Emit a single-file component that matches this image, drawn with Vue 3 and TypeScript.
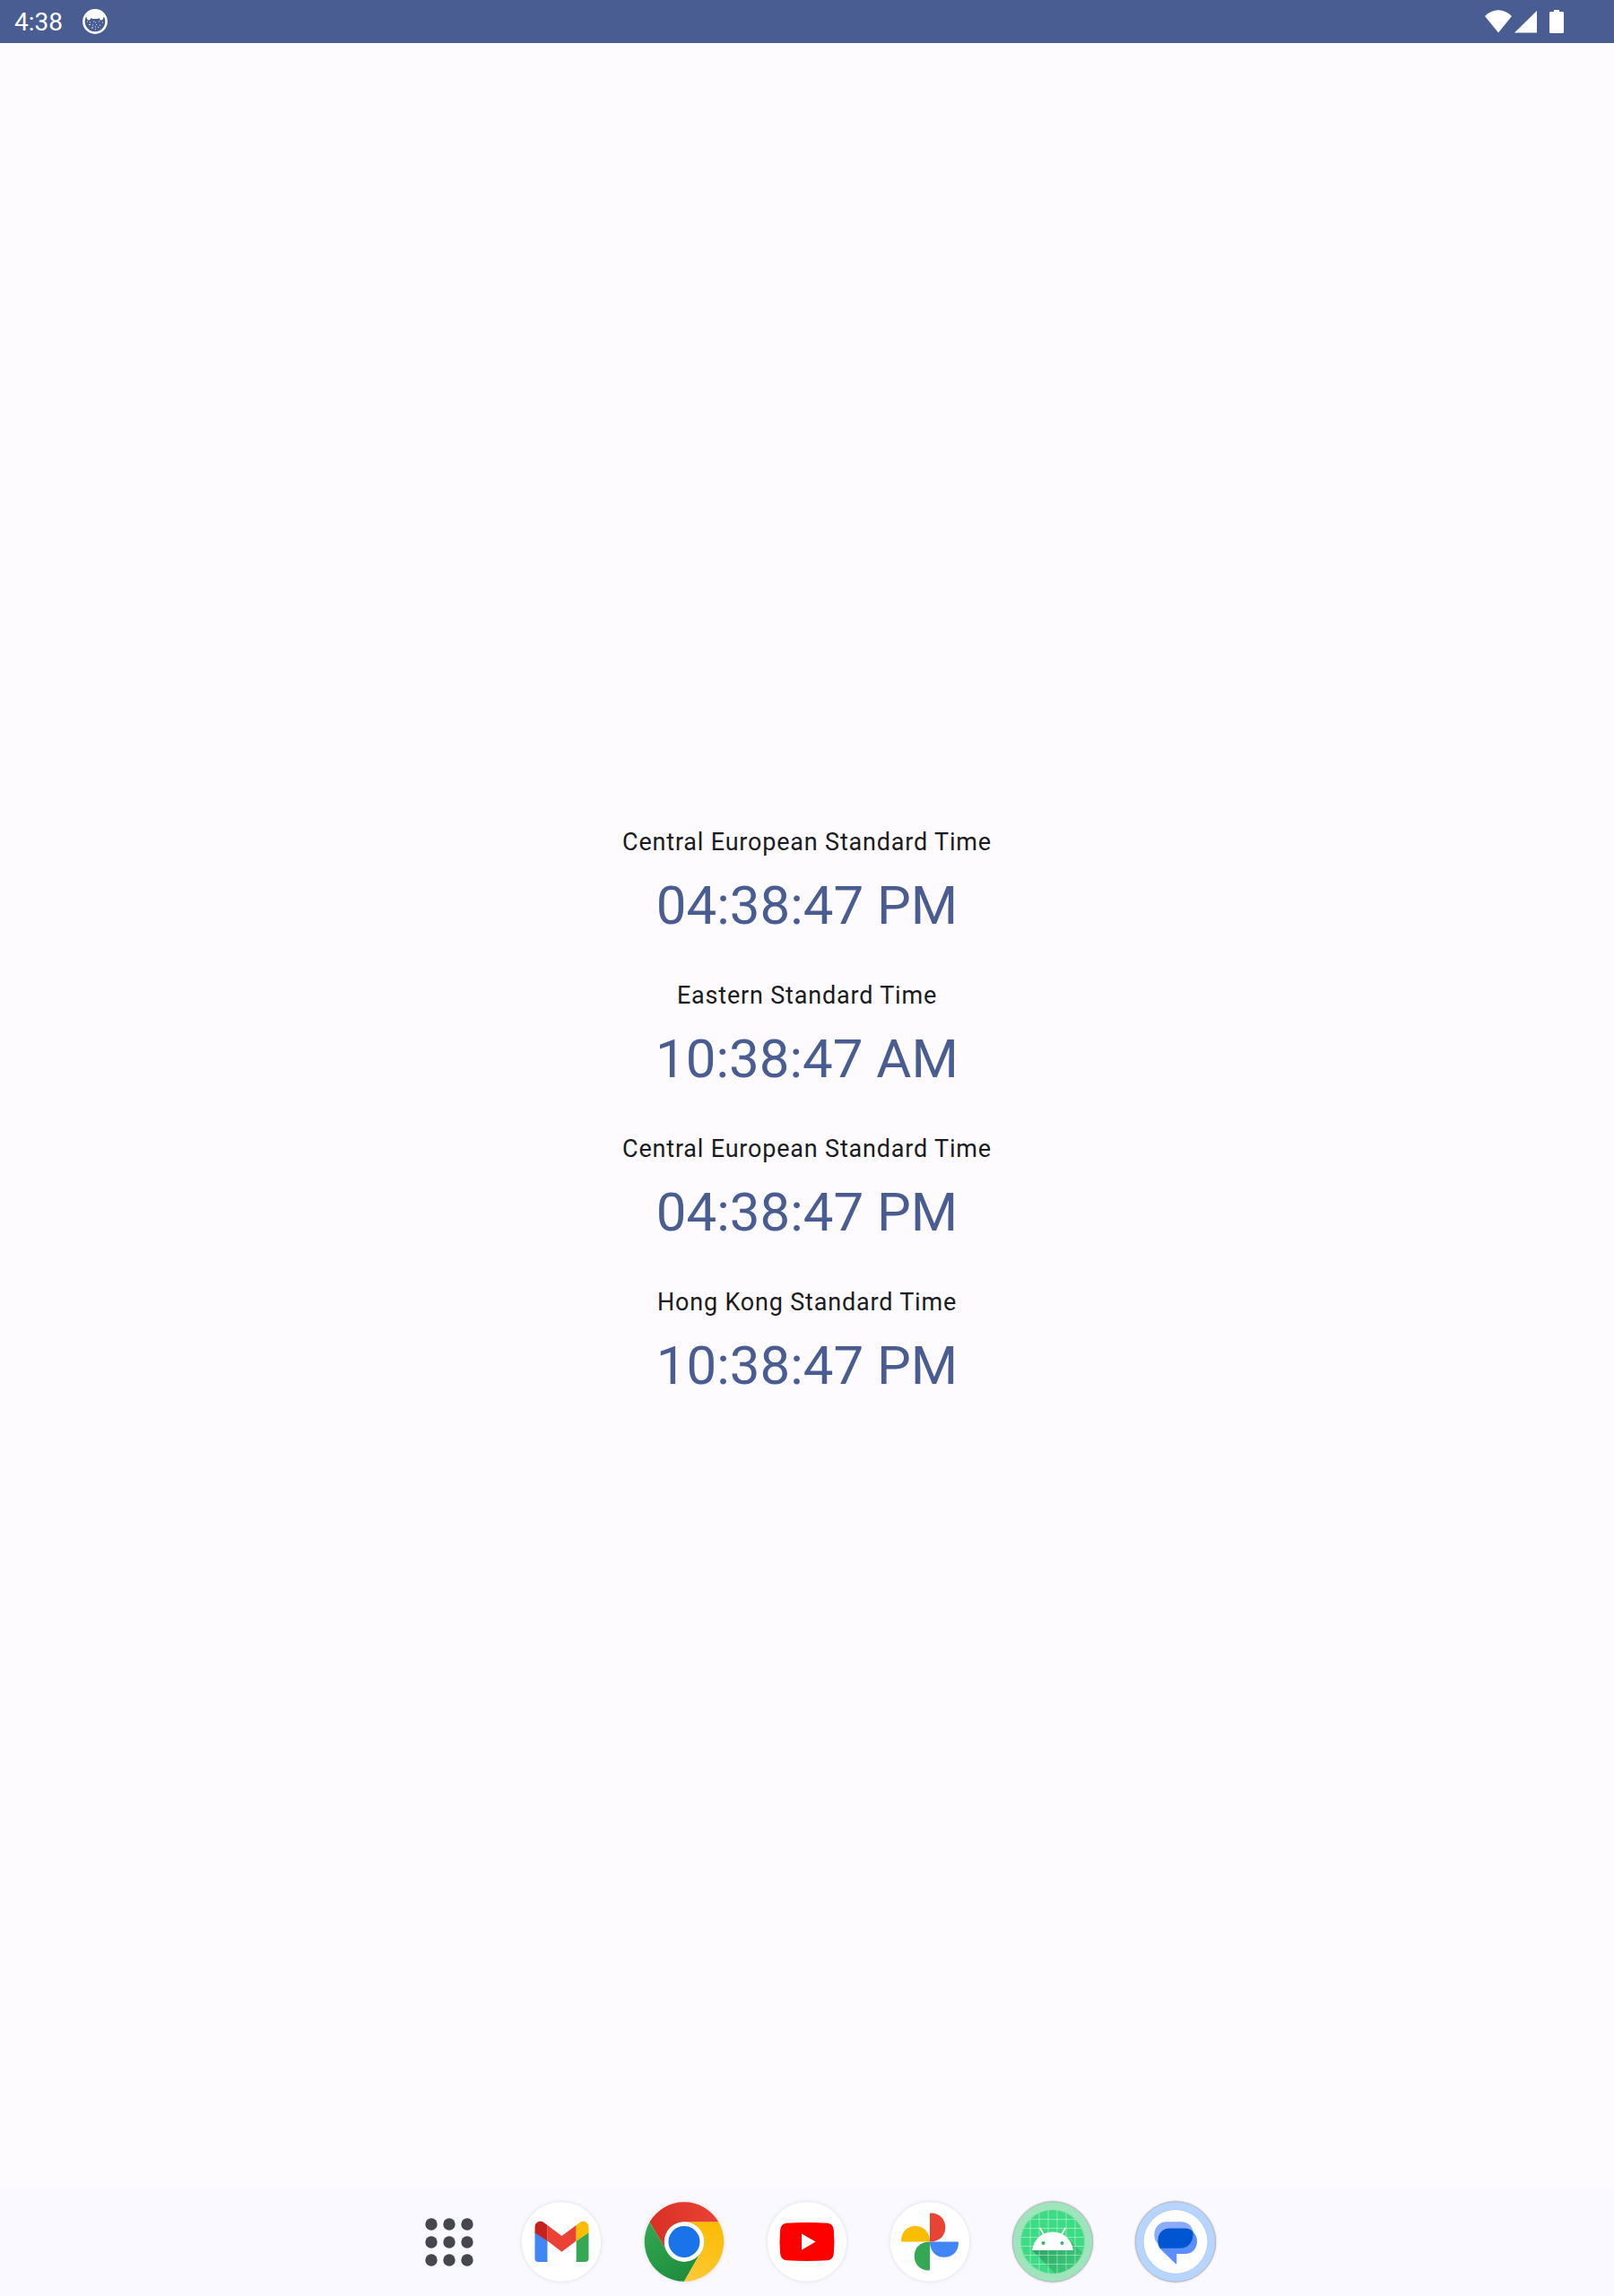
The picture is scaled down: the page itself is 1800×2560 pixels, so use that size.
<script setup lang="ts">
interface Clock {
  id: number
  zone: string
  time: string
}

const clocks: Clock[] = [
  { id: 1, zone: 'Central European Standard Time', time: '04:38:47 PM' },
  { id: 2, zone: 'Eastern Standard Time', time: '10:38:47 AM' },
  { id: 3, zone: 'Central European Standard Time', time: '04:38:47 PM' },
  { id: 4, zone: 'Hong Kong Standard Time', time: '10:38:47 PM' },
]

const dots: number[] = [7, 27, 47]
const gridLines: number[] = [20, 30, 40, 50, 60, 70]
</script>

<template>
  <div class="screen">
    <header class="status-bar">
      <div class="status-group">
        <span class="status-time">4:38</span>
        <svg class="notification" width="28" height="28" viewBox="0 0 28 28" aria-hidden="true">
          <circle cx="14" cy="14" r="12.600" fill="none" stroke="#fff" stroke-width="2.600" />
          <path d="M4 8 Q14 -6 24 8 L22.500 12 L20 12.500 L18.500 10 L17 11 H11 L9.500 10 L8 12.500 L5.500 12 Z" fill="#fff" />
          <path
            d="M5 14h1M8 15h1M12 14h1M14 15h1M18 14h1M22 15h1M7 17.500h2M11 18h1M15 17.500h1M19 18h1M10 21h2M14 20h1M17 20.500h1M14 23h1"
            stroke="#fff" stroke-width="1.200" opacity=".85"
          />
        </svg>
      </div>
      <div class="status-group">
        <svg width="30" height="26" viewBox="0 0 30 26" aria-hidden="true">
          <path d="M0 7 C9 -2 21 -2 30 7 L15 25.500 Z" fill="#fff" />
        </svg>
        <svg class="signal" width="25" height="26" viewBox="0 0 25 26" aria-hidden="true">
          <path d="M25 1 V25.500 H0 Z" fill="#fff" />
        </svg>
        <svg class="battery" width="16" height="26" viewBox="0 0 16 26" aria-hidden="true">
          <path d="M5 0 H11 V2 H14.500 Q16 2 16 3.500 V24.500 Q16 26 14.500 26 H1.500 Q0 26 0 24.500 V3.500 Q0 2 1.500 2 H5 Z" fill="#fff" />
        </svg>
      </div>
    </header>

    <main class="clocks">
      <section v-for="clock in clocks" :key="clock.id" class="clock">
        <p class="zone">{{ clock.zone }}</p>
        <p class="time">{{ clock.time }}</p>
      </section>
    </main>

    <nav class="dock" aria-label="Apps">
      <button class="dock-item all-apps" type="button" aria-label="All apps">
        <svg width="54" height="54" viewBox="0 0 54 54">
          <template v-for="y in dots" :key="y">
            <circle v-for="x in dots" :key="x" :cx="x" :cy="y" r="6.700" fill="#45464f" />
          </template>
        </svg>
      </button>

      <button class="dock-item" type="button" aria-label="Gmail">
        <svg class="app-icon" viewBox="0 0 90 90">
          <circle cx="45" cy="44.500" r="44.300" fill="#fff" />
          <path d="M15.500 34 L29.500 43.500 V67 H19.500 Q15.500 67 15.500 63 Z" fill="#4285f4" />
          <path d="M75.500 34 L61.700 43.500 V67 H71.500 Q75.500 67 75.500 63 Z" fill="#34a853" />
          <path d="M29.500 26 L45.500 38 L61.700 26 V43.500 L45.500 55.700 L29.500 43.500 Z" fill="#ea4335" />
          <path d="M15.500 34.500 V28.500 C15.500 22.500 21.500 20 26 23.400 L29.500 26 V43.700 Z" fill="#c5221f" />
          <path d="M75.500 34.500 V28.500 C75.500 22.500 69.500 20 65 23.400 L61.700 26 V43.700 Z" fill="#fbbc04" />
        </svg>
      </button>

      <button class="dock-item" type="button" aria-label="Chrome">
        <svg class="app-icon" viewBox="0 0 90 90">
          <defs>
            <linearGradient id="chrome-red" x1="0" x2="1">
              <stop offset="0" stop-color="#d93025" />
              <stop offset="1" stop-color="#ea4335" />
            </linearGradient>
            <linearGradient id="chrome-green" x1="0" y1="0" x2=".6" y2="1">
              <stop offset="0" stop-color="#34a853" />
              <stop offset="1" stop-color="#1e8e3e" />
            </linearGradient>
            <linearGradient id="chrome-yellow" x1=".6" y1="0" x2=".3" y2="1">
              <stop offset="0" stop-color="#fbbc04" />
              <stop offset="1" stop-color="#fcc934" />
            </linearGradient>
          </defs>
          <path d="M6.600 22.500 A44.300 44.300 0 0 1 83.400 22.500 H45 A22 22 0 0 0 26 55.500 Z" fill="url(#chrome-red)" />
          <path d="M6.600 22.500 L26 55.500 A22 22 0 0 0 64 55.500 L45 88.800 A44.300 44.300 0 0 1 6.600 22.500 Z" fill="url(#chrome-green)" />
          <path d="M83.400 22.500 A44.300 44.300 0 0 1 45 88.800 L64 55.500 A22 22 0 0 0 45 22.500 Z" fill="url(#chrome-yellow)" />
          <circle cx="45" cy="44.500" r="22.200" fill="#fff" />
          <circle cx="45" cy="44.500" r="17.500" fill="#1a73e8" />
        </svg>
      </button>

      <button class="dock-item" type="button" aria-label="YouTube">
        <svg class="app-icon" viewBox="0 0 90 90">
          <circle cx="45" cy="44.500" r="44.300" fill="#fff" />
          <path
            d="M22 23.700 Q45 22.300 68 23.700 Q74 24.500 74.800 31 Q76 44.500 74.800 58 Q74 64.500 68 65.300 Q45 66.800 22 65.300 Q16 64.500 15.200 58 Q13.800 44.500 15.200 31 Q16 24.500 22 23.700 Z"
            fill="#f00"
          />
          <path d="M39 35.500 L54.600 44.500 L39 53.700 Z" fill="#fff" />
        </svg>
      </button>

      <button class="dock-item" type="button" aria-label="Photos">
        <svg class="app-icon" viewBox="0 0 90 90">
          <circle cx="45" cy="44.500" r="44.300" fill="#fff" />
          <path d="M45 44.500 V13.500 Q45 12.500 46 12.500 C56 12.500 62.300 19.500 62.300 28.500 S56 44.500 45 44.500 Z" fill="#ea4335" />
          <path d="M45 44.500 H76 Q77 44.500 77 45.500 C77 55.500 70 61.800 61 61.800 S45 55.500 45 44.500 Z" fill="#4285f4" />
          <path d="M45 44.500 V75.500 Q45 76.500 44 76.500 C34 76.500 27.700 69.500 27.700 60.500 S34 44.500 45 44.500 Z" fill="#34a853" />
          <path d="M45 44.500 H14 Q13 44.500 13 43.500 C13 33.500 20 27 29 27 S45 33.500 45 44.500 Z" fill="#fbbc04" />
        </svg>
      </button>

      <button class="dock-item" type="button" aria-label="Clock app">
        <svg class="app-icon ringed" viewBox="0 0 90 90">
          <defs>
            <clipPath id="android-clip"><circle cx="45" cy="44.500" r="35.400" /></clipPath>
            <linearGradient id="android-shadow" x1="0" y1="0" x2="1" y2=".7">
              <stop offset="0" stop-color="#2c9c60" />
              <stop offset="1" stop-color="#3bd17d" />
            </linearGradient>
          </defs>
          <circle cx="45" cy="44.500" r="44.700" fill="#9fe5bc" stroke="#b5b9b9" stroke-width="1" />
          <circle cx="45" cy="44.500" r="36.300" fill="#90dcb0" />
          <g clip-path="url(#android-clip)">
            <circle cx="45" cy="44.500" r="35.400" fill="#3ddc84" />
            <path d="M22 54 L49 81 H85 V63 L62 41 Z" fill="url(#android-shadow)" />
            <g stroke="#fff" stroke-opacity=".45" stroke-width=".9">
              <template v-for="p in gridLines" :key="p">
                <line :x1="p" y1="8" :x2="p" y2="82" />
                <line x1="8" :y1="p - 0.5" x2="82" :y2="p - 0.5" />
              </template>
            </g>
          </g>
          <path d="M22.200 54 C23.500 42 33 33.600 45 33.600 S66.500 42 67.800 54 Z" fill="#fff" />
          <path d="M30.800 29 L35 36.500 M59.200 29 L55 36.500" stroke="#fff" stroke-width="1.600" />
          <circle cx="34.500" cy="46" r="2" fill="#33b56f" />
          <circle cx="55.500" cy="46" r="2" fill="#33b56f" />
        </svg>
      </button>

      <button class="dock-item" type="button" aria-label="Messages">
        <svg class="app-icon ringed" viewBox="0 0 90 90">
          <circle cx="45" cy="44.500" r="44.700" fill="#b7d5ff" stroke="#b5b9c2" stroke-width="1" />
          <circle cx="45" cy="44.500" r="36.300" fill="#abcbf8" />
          <circle cx="45" cy="44.500" r="35.500" fill="#fff" />
          <path d="M36 29.500 H58 C65 32 69 37.500 69 44 C69 52 63.500 58 56 58 H46.300 V68.500 Q46 70 44.500 68.500 L28 52.500 Q25 49 25 43 Z" fill="#5b8fff" />
          <path d="M21.300 37 C21.300 28.500 27 22.300 35 22.300 H51 C58.500 22.300 63.500 27 64.500 33 Q61 29.500 56 29.500 H38 C29.500 29.500 25 35.500 25.500 47 Q21.300 43 21.300 37 Z" fill="#8aabff" />
          <path d="M38 29.500 H56 Q61.500 29.500 64.300 33 C66 43 60 51.800 50 51.800 H28 C25.500 48 25 44 25.500 41 C26.500 34 31 29.500 38 29.500 Z" fill="#0056d2" />
        </svg>
      </button>
    </nav>
  </div>
</template>

<style>
body {
  margin: 0;
  background: #fefbff;
}
</style>

<style scoped>
.screen {
  display: flex;
  flex-direction: column;
  min-height: 100vh;
  background: #fefbff;
  font-family: Roboto, "Noto Sans", sans-serif;
}

.status-bar {
  display: flex;
  align-items: center;
  justify-content: space-between;
  box-sizing: border-box;
  height: 48px;
  padding: 0 56px 0 16px;
  background: #4a5d92;
  color: #fff;
}

.status-group {
  display: flex;
  align-items: center;
}

.status-time {
  padding-top: 2px;
  font-size: 28px;
  line-height: 40px;
}

.notification {
  margin-left: 22px;
}

.signal {
  margin-left: 3px;
}

.battery {
  margin-left: 14px;
}

.clocks {
  display: flex;
  flex: 1;
  flex-direction: column;
  align-items: center;
  justify-content: center;
}

.clock {
  padding: 17px 0 27px;
  text-align: center;
}

/* Body-large tracking */
.zone {
  margin: 0 0 14px;
  color: #1a1b21;
  font-size: 27px;
  line-height: 40px;
  letter-spacing: 0.03em;
}

.time {
  margin: 0;
  color: #4a5d92;
  font-size: 60px;
  line-height: 73px;
}

.dock {
  display: flex;
  align-items: center;
  justify-content: center;
  gap: 47px;
  height: 120px;
  background: #f9f9ff;
}

.dock-item {
  display: flex;
  align-items: center;
  justify-content: center;
  width: 90px;
  height: 90px;
  padding: 0;
  border: 0;
  border-radius: 50%;
  background: none;
  cursor: pointer;
}

.all-apps {
  width: 66px;
  margin-left: 24px;
}

.app-icon {
  width: 90px;
  height: 90px;
  overflow: visible;
  filter: drop-shadow(0 0 2px rgba(60, 60, 80, 0.16));
}

.ringed {
  filter: drop-shadow(0 0 1px rgba(60, 60, 80, 0.3));
}
</style>
